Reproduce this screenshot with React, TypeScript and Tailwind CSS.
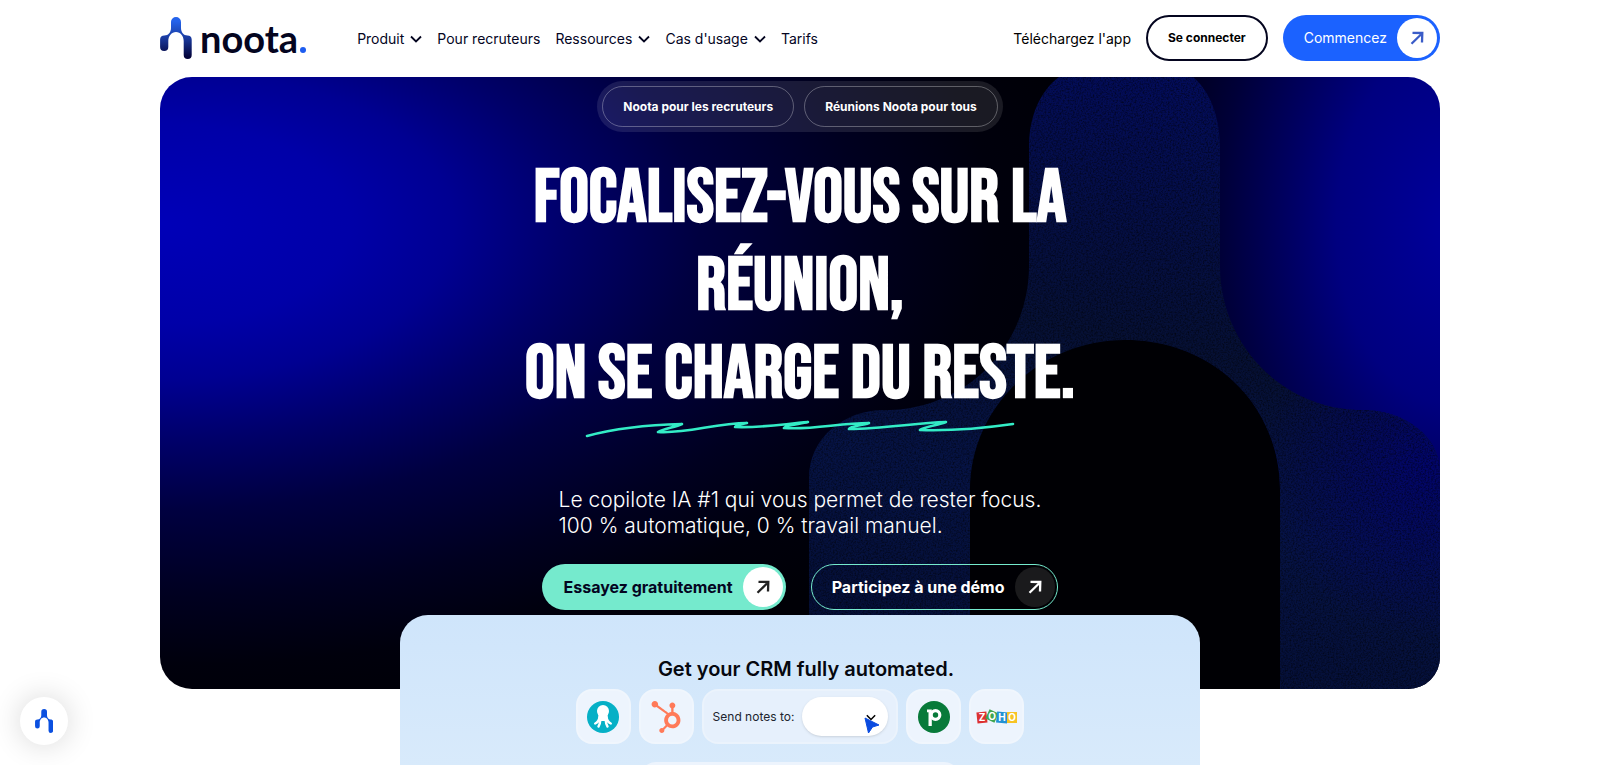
import React from 'react';
import { FaHubspot } from 'react-icons/fa';

const links = [
  { name: 'Produit', path: '/produit', menu: true },
  { name: 'Pour recruteurs', path: '/recruteurs', menu: false },
  { name: 'Ressources', path: '/ressources', menu: true },
  { name: "Cas d'usage", path: '/cas-usage', menu: true },
  { name: 'Tarifs', path: '/tarifs', menu: false },
];

const MARK =
  'M11 5a5 5 0 0 1 10 0V11C21 15 23.500 18.500 27.500 18.500C30 18.500 31.700 20 31.700 22.500V38a4 4 0 0 1-8 0V24C23.700 19 20.500 15 16 15C11.500 15 8.300 19 8.300 24V30a4.100 4.100 0 0 1-8.200 0V22.500C.1 20 1.800 18.500 4.300 18.500C8.500 18.500 11 15 11 11Z';

const Chevron = ({ className }: { className?: string }) => (
  <svg viewBox="0 0 12 8" fill="none" className={className}>
    <path d="M1 1.500l5 5 5-5" stroke="currentColor" strokeWidth="1.800" />
  </svg>
);

const Arrow = ({ className }: { className?: string }) => (
  <svg viewBox="0 0 14 14" fill="none" className={className}>
    <path d="M1.500 12.800L12 2.500M2.500 1.800L12.300 2L12 11.500" stroke="currentColor" strokeWidth="2.300" />
  </svg>
);

const Logo = () => (
  <a href="/" className="flex items-center">
    <svg viewBox="0 0 32 42" className="h-[42px] w-8">
      <defs>
        <linearGradient id="mark" x1="0" y1="0" x2="0" y2="1">
          <stop offset="0.100" stopColor="#2463eb" />
          <stop offset="0.500" stopColor="#1a3a9e" />
          <stop offset="0.950" stopColor="#03033a" />
        </linearGradient>
      </defs>
      <path d={MARK} fill="url(#mark)" />
    </svg>
    <span className="flex items-baseline gap-[2px] pl-2 font-[Lato] text-[38px] leading-10 font-bold text-[#04051f]">
      noota
      <span className="size-[6px] rounded-full bg-[#1d5cf0]" />
    </span>
  </a>
);

const Header = () => (
  <header className="mx-auto mb-px flex h-[76px] w-4/5 items-center justify-between">
    <div className="flex items-center gap-[51px]">
      <Logo />
      <nav className="flex items-center gap-[15px] pt-px text-sm text-[#04051f]">
        {links.map(({ name, path, menu }) => (
          <a key={name} href={path} className="flex items-center gap-[6px] whitespace-nowrap">
            {name}
            {menu && <Chevron className="w-3" />}
          </a>
        ))}
      </nav>
    </div>
    <div className="flex items-center gap-[15px]">
      <a href="/app" className="pt-px text-sm whitespace-nowrap">
        Téléchargez l'app
      </a>
      <button className="h-[46px] rounded-full border-2 border-[#04051f] px-5 text-xs font-bold whitespace-nowrap">
        Se connecter
      </button>
      <button className="flex h-[46px] items-center gap-[10px] rounded-full bg-[#1b62ff] pr-[3px] pl-[21px] text-sm text-white">
        Commencez
        <span className="flex size-10 items-center justify-center rounded-full bg-white text-[#3a5cc8]">
          <Arrow className="w-[14px]" />
        </span>
      </button>
    </div>
  </header>
);

// large silhouette behind the hero copy
const HeroShape = () => (
  <svg
    viewBox="0 0 1280 612"
    preserveAspectRatio="xMaxYMid slice"
    className="absolute inset-0 h-full w-full"
    aria-hidden="true"
  >
    <defs>
      <linearGradient id="body" x1="0.700" y1="0" x2="0.500" y2="1">
        <stop offset="0" stopColor="#030c5c" />
        <stop offset="0.450" stopColor="#061034" />
        <stop offset="0.700" stopColor="#061344" />
        <stop offset="1" stopColor="#050f36" />
      </linearGradient>
      <radialGradient id="shoulder" cx="1270" cy="390" r="170" gradientUnits="userSpaceOnUse">
        <stop offset="0" stopColor="#02056a" />
        <stop offset="1" stopColor="#02056a" stopOpacity="0" />
      </radialGradient>
      <filter id="grain" x="0" y="0" width="1" height="1">
        <feTurbulence type="fractalNoise" baseFrequency="0.600" numOctaves="2" />
        <feColorMatrix values="0 0 0 0 0  0 0 0 0 0  0 0 0 0 0  0 0 0 2 -0.800" />
        <feComposite in2="SourceGraphic" operator="in" />
      </filter>
      <path
        id="silhouette"
        d="M649 612V401C649 360 685 333 724 333C810 333 869 265 869 189V70C869 40 880 14 899 0H1033C1050 14 1060 40 1060 70V189C1060 265 1120 333 1203 333C1245 333 1280 360 1280 395V612H1120V413C1120 330 1055 263 965 263C880 263 810 330 810 413V612Z"
      />
    </defs>
    <path d="M810 612V413C810 330 880 263 965 263C1055 263 1120 330 1120 413V612Z" fill="#000004" />
    <use href="#silhouette" fill="url(#body)" />
    <use href="#silhouette" fill="url(#shoulder)" />
    <use href="#silhouette" filter="url(#grain)" opacity="0.600" />
  </svg>
);

const Scribble = () => (
  <svg viewBox="0 0 430 20" fill="none" className="w-[430px]" aria-hidden="true">
    <path
      d="M2 17C24 11 55 6 97 5C91 8 78 10 73 13C102 15 130 4 162 4C158 5 150 6 150 8C178 9 198 5 223 3C216 5 200 6 199 9C228 11 254 4 284 4C279 6 265 7 264 10C298 10 330 4 361 3C354 6 338 8 335 11C366 12 400 9 428 5"
      stroke="#33ecc6"
      strokeWidth="2.600"
      strokeLinecap="round"
      strokeLinejoin="round"
    />
  </svg>
);

const Hero = () => (
  <section className="relative mx-auto w-4/5 overflow-hidden rounded-[32px] bg-[#000006] bg-[radial-gradient(74%_82%_at_0%_24%,#0000b8_0%,#0000a8_20%,#000092_31%,#00006a_43%,#000040_57%,#000020_74%,#00000c_88%,transparent_100%),radial-gradient(26%_84%_at_101%_24%,#00009c_0%,#000080_35%,#000038_70%,transparent_100%)] pt-1 pb-[79px] text-white">
    <HeroShape />
    <div className="relative flex flex-col items-center">
      <div className="flex gap-[10px] rounded-full bg-white/10 p-[5px] text-xs font-bold">
        <button className="h-[41px] rounded-full border border-white/30 px-5">Noota pour les recruteurs</button>
        <button className="h-[41px] rounded-full border border-white/30 px-5">Réunions Noota pour tous</button>
      </div>
      <h1 className="mt-[23px] text-center font-['Bebas_Neue','Noto_Sans_ExtraCondensed','Roboto_Condensed','Open_Sans_Condensed','Noto_Sans_Condensed',Roboto,sans-serif] text-[74px] leading-[88px] font-bold whitespace-nowrap uppercase">
        Focalisez-vous sur la
        <br />
        réunion,
        <br />
        on se charge du reste.
      </h1>
      <Scribble />
      <p className="mt-12 text-[21px] leading-[26px] font-light">
        Le copilote IA #1 qui vous permet de rester focus.
        <br />
        100 % automatique, 0 % travail manuel.
      </p>
      <div className="mt-[25px] flex gap-[25px] font-bold">
        <button className="flex h-[46px] items-center gap-[10px] rounded-full bg-[#75eacd] pr-[3px] pl-[21px] text-[#04051f]">
          Essayez gratuitement
          <span className="flex size-10 items-center justify-center rounded-full bg-white text-[#222]">
            <Arrow className="w-[14px]" />
          </span>
        </button>
        <button className="flex h-[46px] items-center gap-[10px] rounded-full border border-[#75eacd] pr-[2px] pl-5">
          Participez à une démo
          <span className="flex size-10 items-center justify-center rounded-full bg-[#1a1a1c]">
            <Arrow className="w-[14px]" />
          </span>
        </button>
      </div>
    </div>
  </section>
);

const Tile = ({ children }: { children: React.ReactNode }) => (
  <div className="flex size-[55px] items-center justify-center rounded-2xl border-2 border-white/20 bg-[#edf4fd]">
    {children}
  </div>
);

const Octopus = () => (
  <svg viewBox="0 0 32 32" className="size-8">
    <circle cx="16" cy="16" r="16" fill="#06b0c6" />
    <path
      d="M16 4a6 6 0 0 1 6 6C22 12.500 20.500 13.500 20.500 15.500L21 20H11L11.500 15.500C11.500 13.500 10 12.500 10 10a6 6 0 0 1 6-6Z"
      fill="#fff"
    />
    <path
      d="M12.500 16C12 19.500 10.500 21.500 8.200 22.500M13.500 18C13.300 21 12.800 23.500 11.500 25.500M18.500 18C18.700 21 19.200 23.500 20.500 25.500M19.500 16C20 19.500 21.500 21.500 23.800 22.500"
      stroke="#fff"
      strokeWidth="2.400"
      strokeLinecap="round"
      fill="none"
    />
  </svg>
);

const Pipedrive = () => (
  <svg viewBox="0 0 32 32" className="size-8">
    <circle cx="16" cy="16" r="16" fill="#087a3a" />
    <circle cx="17.500" cy="14" r="4.300" fill="none" stroke="#fff" strokeWidth="3.200" />
    <path d="M9 8.500H13.800V25H10.500V11.300H9Z" fill="#fff" />
  </svg>
);

const Zoho = () => (
  <svg
    viewBox="0 0 42 16"
    className="w-[42px]"
    fontFamily="Inter, sans-serif"
    fontWeight="700"
    fontSize="10"
    textAnchor="middle"
    fill="#fff"
  >
    <rect x="1" y="3" width="10" height="11" fill="#dc3131" transform="rotate(-6 6 9)" />
    <rect x="11" y="2" width="10" height="10" fill="#3fa650" transform="rotate(25 16 7)" />
    <rect x="20.500" y="3" width="11" height="11" fill="#2191d4" transform="rotate(6 26 9)" />
    <rect x="31" y="3" width="10" height="11" fill="#f7c325" />
    <text x="6" y="12">
      Z
    </text>
    <text x="16" y="11">
      O
    </text>
    <text x="26" y="12">
      H
    </text>
    <text x="36" y="12">
      O
    </text>
  </svg>
);

const CrmCard = () => (
  <section className="relative mx-auto -mt-[74px] flex w-1/2 flex-col items-center overflow-hidden rounded-t-[28px] bg-linear-to-b from-[#cfe5fb] to-[#d8eafb] pt-10">
    <h2 className="pl-3 text-xl leading-7 font-semibold text-[#06080f]">Get your CRM fully automated.</h2>
    <div className="mt-[6px] flex gap-2">
      <Tile>
        <Octopus />
      </Tile>
      <Tile>
        <FaHubspot className="size-8 text-[#ff7a59]" />
      </Tile>
      <div className="flex h-[55px] items-center gap-2 rounded-2xl border-2 border-white/20 bg-[#e6f0fc] pr-2 pl-[9px]">
        <label htmlFor="crm" className="text-xs text-[#20242e]">
          Send notes to:
        </label>
        <div className="relative">
          <select id="crm" className="block h-[39px] w-[86px] appearance-none rounded-full bg-white shadow-sm" />
          <Chevron className="pointer-events-none absolute top-[17px] right-3 w-[10px]" />
          <svg viewBox="0 0 16 18" className="pointer-events-none absolute top-5 right-2 w-4">
            <path d="M1 1L15 8L8.500 10L4.500 16Z" fill="#0a4be0" stroke="#0a4be0" strokeLinejoin="round" />
          </svg>
        </div>
      </div>
      <Tile>
        <Pipedrive />
      </Tile>
      <Tile>
        <Zoho />
      </Tile>
    </div>
    <div className="mt-[18px] -mb-[37px] h-10 w-2/5 rounded-2xl bg-[#edf4fd]" />
  </section>
);

const App = () => (
  <div className="bg-white font-[Inter,sans-serif] text-black">
    <Header />
    <main>
      <Hero />
      <CrmCard />
    </main>
    <button
      aria-label="Noota"
      className="fixed bottom-5 left-5 flex size-12 items-center justify-center rounded-full bg-white shadow-[0_0_30px_rgba(0,0,0,0.16)]"
    >
      <svg viewBox="0 0 32 42" className="h-6">
        <path d={MARK} fill="#0b50e0" />
      </svg>
    </button>
  </div>
);

export default App;
